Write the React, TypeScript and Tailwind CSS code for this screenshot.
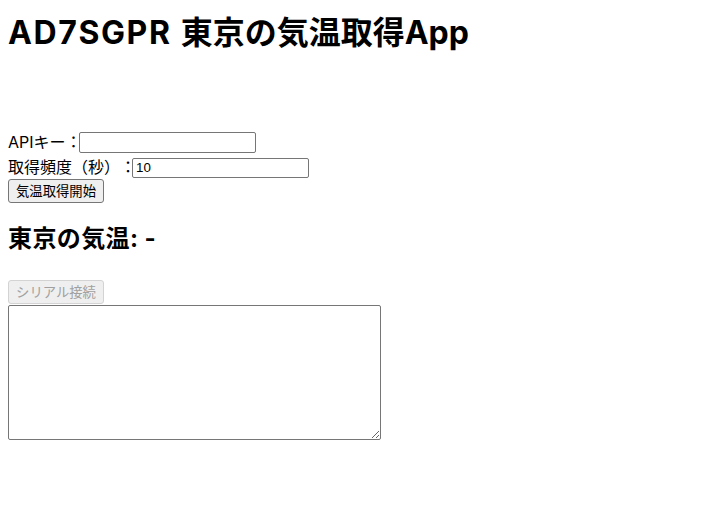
import React, { useState } from "react";

const jp = 'Inter, "Noto Sans CJK JP", "Noto Sans", sans-serif';

export default function App() {
  const [apiKey, setApiKey] = useState("");
  const [interval, setIntervalSec] = useState("10");
  const [log, setLog] = useState("");

  return (
    <div
      className="p-2 text-black bg-white min-h-[530px] [text-spacing-trim:space-all]"
      style={{ fontFamily: jp }}
    >
      <h1 className="text-[32px] font-bold leading-[40px] mt-[5px]">
        <span className="tracking-[1.6px]">AD7SGPR </span>東京の気温取得App
      </h1>

      <div className="mt-[79px]">
        <div className="flex items-center h-[21px] text-[16px] leading-[21px]">
          <span>APIキー：</span>
          <input
            type="text"
            value={apiKey}
            onChange={(e) => setApiKey(e.target.value)}
            className="ml-[-3px] w-[177px] h-[21px] border border-[#767676] rounded-[2px] px-[2px] text-[13.33px] outline-none"
            style={{ fontFamily: '"Liberation Sans", Arial, sans-serif' }}
          />
        </div>
        <div className="flex items-center h-[21px] mt-[4px] text-[16px] leading-[21px]">
          <span>取得頻度（秒）：</span>
          <input
            type="text"
            value={interval}
            onChange={(e) => setIntervalSec(e.target.value)}
            className="ml-[-4px] w-[177px] h-[20px] border border-[#767676] rounded-[2px] px-[3px] text-[13.33px] outline-none"
            style={{ fontFamily: '"Liberation Sans", Arial, sans-serif' }}
          />
        </div>
        <button
          type="button"
          className="mt-[1px] w-[96px] h-[24px] border border-[#767676] rounded-[3px] bg-[#efefef] text-[13.33px] leading-[22px] text-black"
        >
          気温取得開始
        </button>
      </div>

      <h2 className="mt-[22px] text-[24px] font-bold leading-[28px] tracking-[0.4px]">東京の気温: -</h2>

      <div className="mt-[27px] flex flex-col items-start">
        <button
          type="button"
          disabled
          className="w-[96px] h-[24px] border border-[#d3d3d3] rounded-[3px] bg-[#efefef] text-[13.33px] leading-[22px] text-[#a0a0a0]"
        >
          シリアル接続
        </button>
        <textarea
          value={log}
          onChange={(e) => setLog(e.target.value)}
          className="mt-[1px] w-[373px] h-[135px] border border-[#767676] rounded-[2px] p-[2px] text-[13.33px] outline-none"
          style={{ fontFamily: '"Liberation Mono", monospace' }}
        />
      </div>
    </div>
  );
}
